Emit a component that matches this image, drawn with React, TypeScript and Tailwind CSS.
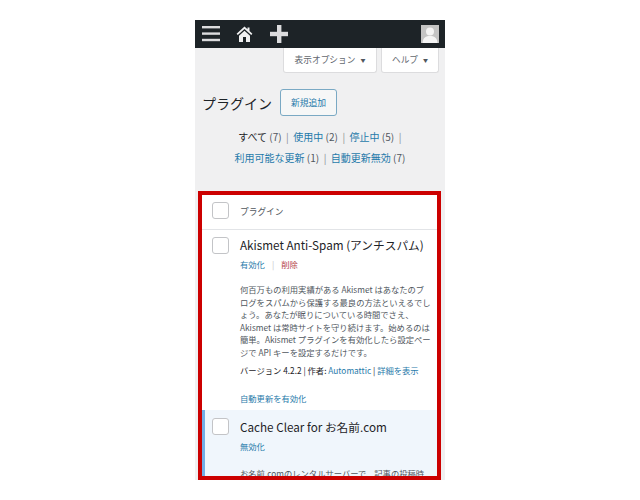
const Box = ({ className = "" }: { className?: string }) => (
  <div className={`w-[17px] h-[17px] shrink-0 bg-white border border-[#c3c4c7] rounded-[3px] ${className}`} />
);

const Sep = () => <span className="text-[#8c8f94] mx-[4.5px]">|</span>;

export default function App() {
  return (
    <div className="w-[640px] h-[500px] bg-white overflow-hidden pt-5 font-['Noto_Sans_CJK_JP','Noto_Sans',sans-serif]">
      <div className="relative w-[250px] h-[460px] ml-[195px] bg-[#f0f0f1] overflow-hidden flex flex-col">
        {/* admin bar */}
        <div className="h-[28px] shrink-0 bg-[#1d2327] flex items-center pl-[7px] pr-[6px]">
          <svg width="18" height="16" viewBox="0 0 18 16" className="text-[#dcdcde]" fill="currentColor">
            <rect y="0" width="18" height="2.4" />
            <rect y="6.4" width="18" height="2.4" />
            <rect y="12.8" width="18" height="2.4" />
          </svg>
          <svg width="17" height="17" viewBox="0 0 17 17" className="ml-[16px] text-[#f0f0f1]" fill="currentColor">
            <path d="M8.5 0.5 L0.6 7.8 L1.8 9 L8.5 2.9 L15.2 9 L16.4 7.8 L13.5 5.1 V1.5 H11.5 V3.3 Z" />
            <path d="M8.5 4.8 L3 9.8 V16 H7 V11 H10 V16 H14 V9.8 Z" />
          </svg>
          <svg width="18" height="18" viewBox="0 0 18 18" className="ml-[17px] text-[#dcdcde]" fill="currentColor">
            <rect x="7" y="0" width="4.4" height="18" />
            <rect x="0" y="6.8" width="18" height="4.4" />
          </svg>
          <div className="ml-auto w-[18px] h-[18px] bg-[#c4c4c4] overflow-hidden">
            <svg width="18" height="18" viewBox="0 0 18 18" fill="#f4f4f4">
              <circle cx="9" cy="6.5" r="4" />
              <path d="M1.5 18 C2 12.5 5 11 9 11 C13 11 16 12.5 16.5 18 Z" />
            </svg>
          </div>
        </div>

        {/* screen options */}
        <div className="flex justify-end gap-[4px] pr-[6px] text-[8.7px] text-[#646970]">
          <div className="w-[94px] h-[25px] bg-white rounded-b-[3px] border border-t-0 border-[#dcdcde] flex items-center justify-center gap-[5px]">
            表示オプション <span className="text-[5px] text-[#50575e]">▼</span>
          </div>
          <div className="w-[58px] h-[25px] bg-white rounded-b-[3px] border border-t-0 border-[#dcdcde] flex items-center justify-center gap-[5px]">
            ヘルプ <span className="text-[5px] text-[#50575e]">▼</span>
          </div>
        </div>

        {/* heading */}
        <div className="flex items-center mt-[16px] pl-[7px]">
          <h1 className="text-[14px] leading-[20px] text-[#1d2327]">プラグイン</h1>
          <div className="ml-[8px] w-[57px] h-[27px] border border-[#7aa9c4] rounded-[3px] bg-[#f6f7f7] text-[#1f7aaa] text-[8.8px] flex items-center justify-center">
            新規追加
          </div>
        </div>

        {/* filter */}
        <div className="mt-[10px] text-center text-[10px] leading-[21px] text-[#50575e] whitespace-nowrap">
          <div className="pl-[4px]">
            <span className="text-[#1d2327]">すべて</span> (7)<Sep /><span className="text-[#1f7aaa]">使用中</span> (2)<Sep /><span className="text-[#1f7aaa]">停止中</span> (5)<Sep />
          </div>
          <div>
            <span className="text-[#1f7aaa]">利用可能な更新</span> (1)<Sep /><span className="text-[#1f7aaa]">自動更新無効</span> (7)
          </div>
        </div>

        {/* table */}
        <div className="mt-[27px] ml-[7px] mr-[8px] bg-white flex-1 overflow-hidden">
          <div className="h-[35px] flex items-start pt-[7px] pl-[10px] gap-[11px] border-b border-[#e2e4e7]">
            <Box />
            <span className="mt-[4px] text-[8.7px] leading-[12px] text-[#50575e]">プラグイン</span>
          </div>

          <div className="flex pl-[10px] pt-[5px] pr-[3px] gap-[11px]">
            <Box className="mt-[2px]" />
            <div className="min-w-0 flex-1">
              <div className="text-[11.7px] leading-[20px] text-[#1d2327] whitespace-nowrap">Akismet Anti-Spam (アンチスパム)</div>
              <div className="text-[8.3px] leading-[18px] text-[#1f7aaa]">
                有効化<span className="text-[#c3c4c7] mx-[7px]">|</span><span className="text-[#b4444a]">削除</span>
              </div>
              <p className="mt-[10px] text-[8.3px] leading-[12.6px] text-[#50575e] whitespace-nowrap">
                何百万もの利用実績がある Akismet はあなたのブ<br />
                ログをスパムから保護する最良の方法といえるでし<br />
                ょう。あなたが眠りについている時間でさえ、<br />
                Akismet は常時サイトを守り続けます。始めるのは<br />
                簡単。Akismet プラグインを有効化したら設定ペー<br />
                ジで API キーを設定するだけです。
              </p>
              <div className="mt-[2px] text-[8.3px] leading-[18px] text-[#1d2327] whitespace-nowrap">
                バージョン 4.2.2 | 作者: <span className="text-[#1f7aaa]">Automattic</span> | <span className="text-[#1f7aaa]">詳細を表示</span>
              </div>
              <div className="mt-[10px] text-[8.3px] leading-[18px] text-[#1f7aaa]">自動更新を有効化</div>
            </div>
          </div>

          <div className="mt-[3px] flex pl-[7px] pt-[8px] pr-[3px] gap-[11px] bg-[#f0f6fc] border-l-[3px] border-[#72aee6] h-[200px]">
            <Box />
            <div className="min-w-0 flex-1">
              <div className="-mt-[1px] text-[11.7px] leading-[20px] text-[#1d2327] whitespace-nowrap">Cache Clear for お名前.com</div>
              <div className="text-[8.3px] leading-[18px] text-[#1f7aaa]">無効化</div>
              <p className="mt-[12px] text-[8.3px] leading-[12.6px] text-[#50575e] whitespace-nowrap">
                お名前.comのレンタルサーバーで、記事の投稿時
              </p>
            </div>
          </div>
        </div>

        {/* highlight frame over the list */}
        <div className="absolute left-[3px] w-[243px] top-[171px] bottom-0 border-[4px] border-[#cc0000] pointer-events-none" />
      </div>
    </div>
  );
}
